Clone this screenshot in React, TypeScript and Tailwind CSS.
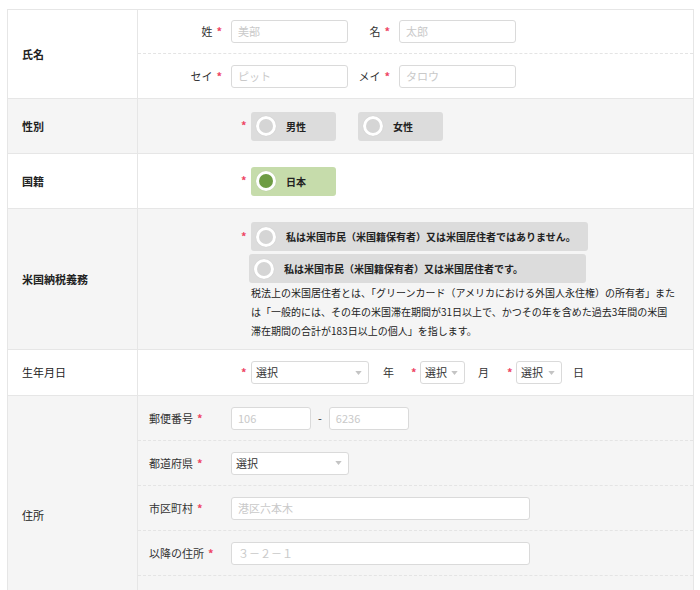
import React from 'react'

const Req = () => (
  <span className="text-[#ee4563] text-[11px] leading-none font-bold">*</span>
)

function TextInput({ w, ph }: { w: string; ph: string }) {
  return (
    <div
      className={`${w} h-[23px] flex items-center px-[6px] bg-white border border-[#dadada] rounded-[3px] text-[11px] text-[#c9c9c9] whitespace-nowrap`}
    >
      {ph}
    </div>
  )
}

function Select({ w }: { w: string }) {
  return (
    <div
      className={`${w} h-[23px] flex items-center justify-between pl-[4px] pr-[6px] bg-white border border-[#dadada] rounded-[3px] text-[11px] text-[#333] whitespace-nowrap`}
    >
      <span>選択</span>
      <svg width="7" height="4" viewBox="0 0 8 5" className="shrink-0">
        <path d="M0 0 L8 0 L4 5 Z" fill="#c4c4c4" />
      </svg>
    </div>
  )
}

function Radio({
  label,
  w,
  checked = false,
  extra = '',
}: {
  label: string
  w: string
  checked?: boolean
  extra?: string
}) {
  return (
    <div
      className={`${w} ${extra} h-[29px] flex items-center pl-[5px] rounded-[3px] ${
        checked ? 'bg-[#c6dcab]' : 'bg-[#dcdcdc]'
      }`}
    >
      <div className="w-[20px] h-[20px] shrink-0 rounded-full bg-white flex items-center justify-center shadow-[0_0_1px_rgba(0,0,0,0.15)]">
        <div
          className={`w-[14px] h-[14px] rounded-full ${checked ? 'bg-[#6e9c44]' : 'bg-[#d5d5d5]'}`}
        />
      </div>
      <span className="ml-[10px] text-[10px] font-bold text-[#222] whitespace-nowrap">{label}</span>
    </div>
  )
}

function Row({
  label,
  gray = false,
  bold = true,
  children,
}: {
  label: string
  gray?: boolean
  bold?: boolean
  children: React.ReactNode
}) {
  return (
    <div className={`flex border-t border-[#e6e6e6] first:border-t-0 ${gray ? 'bg-[#f5f5f5]' : 'bg-white'}`}>
      <div
        className={`w-[130px] shrink-0 flex items-center pl-[14px] border-r border-[#e6e6e6] text-[11px] text-[#222] ${
          bold ? 'font-bold' : ''
        }`}
      >
        {label}
      </div>
      <div className="flex-1 min-w-0">{children}</div>
    </div>
  )
}

function AddrRow({
  label,
  last = false,
  children,
}: {
  label: string
  last?: boolean
  children?: React.ReactNode
}) {
  return (
    <div
      className={`flex items-center ${last ? 'h-[58px]' : 'h-[45px] border-b border-dashed border-[#e4e4e4]'}`}
    >
      <div className="w-[93px] shrink-0 pl-[11px] text-[11px] text-[#333] flex items-center gap-[4px]">
        {label}
        {label && <Req />}
      </div>
      {children}
    </div>
  )
}

export default function App() {
  return (
    <div className="w-[700px] h-[590px] overflow-hidden bg-white font-['Noto_Sans_CJK_JP','Noto_Sans',sans-serif] text-[#333]">
      <div className="ml-[7px] mt-[9px] w-[687px] border border-[#e6e6e6]">
        {/* 氏名 */}
        <Row label="氏名">
          <div className="h-[44px] flex items-center border-b border-dashed border-[#e4e4e4]">
            <div className="w-[93px] pr-[9px] flex justify-end items-center gap-[4px] text-[11px]">
              姓<Req />
            </div>
            <TextInput w="w-[117px]" ph="美部" />
            <div className="w-[51px] pr-[9px] flex justify-end items-center gap-[4px] text-[11px]">
              名<Req />
            </div>
            <TextInput w="w-[117px]" ph="太郎" />
          </div>
          <div className="h-[44px] flex items-center">
            <div className="w-[93px] pr-[9px] flex justify-end items-center gap-[4px] text-[11px]">
              セイ<Req />
            </div>
            <TextInput w="w-[117px]" ph="ピット" />
            <div className="w-[51px] pr-[9px] flex justify-end items-center gap-[4px] text-[11px]">
              メイ<Req />
            </div>
            <TextInput w="w-[117px]" ph="タロウ" />
          </div>
        </Row>

        {/* 性別 */}
        <Row label="性別" gray>
          <div className="h-[54px] flex items-center pl-[103px]">
            <div className="w-[10px] -mt-[6px]">
              <Req />
            </div>
            <Radio label="男性" w="w-[85px]" />
            <Radio label="女性" w="w-[85px]" extra="ml-[22px]" />
          </div>
        </Row>

        {/* 国籍 */}
        <Row label="国籍">
          <div className="h-[54px] flex items-center pl-[103px]">
            <div className="w-[10px] -mt-[6px]">
              <Req />
            </div>
            <Radio label="日本" w="w-[85px]" checked />
          </div>
        </Row>

        {/* 米国納税義務 */}
        <Row label="米国納税義務" gray>
          <div className="pt-[13px] pb-[9px] pl-[103px] pr-[12px]">
            <div className="flex items-center">
              <div className="w-[10px] -mt-[6px]">
                <Req />
              </div>
              <Radio label="私は米国市民（米国籍保有者）又は米国居住者ではありません。" w="w-[337px]" />
            </div>
            <div className="flex mt-[3px] ml-[8px]">
              <Radio label="私は米国市民（米国籍保有者）又は米国居住者です。" w="w-[337px]" />
            </div>
            <p className="ml-[10px] text-[10px] leading-[19px] text-[#222] whitespace-nowrap">
              税法上の米国居住者とは、「グリーンカード（アメリカにおける外国人永住権）の所有者」また
              <br />
              は「一般的には、その年の米国滞在期間が31日以上で、かつその年を含めた過去3年間の米国
              <br />
              滞在期間の合計が183日以上の個人」を指します。
            </p>
          </div>
        </Row>

        {/* 生年月日 */}
        <Row label="生年月日" bold={false}>
          <div className="h-[45px] flex items-center pl-[103px] text-[11px]">
            <div className="w-[10px]">
              <Req />
            </div>
            <Select w="w-[118px]" />
            <span className="ml-[14px] w-[28px]">年</span>
            <div className="w-[9px]">
              <Req />
            </div>
            <Select w="w-[45px]" />
            <span className="ml-[13px] w-[29px]">月</span>
            <div className="w-[9px]">
              <Req />
            </div>
            <Select w="w-[46px]" />
            <span className="ml-[11px]">日</span>
          </div>
        </Row>

        {/* 住所 */}
        <Row label="住所" gray bold={false}>
          <AddrRow label="郵便番号">
            <TextInput w="w-[80px]" ph="106" />
            <span className="mx-[7px] text-[11px]">-</span>
            <TextInput w="w-[80px]" ph="6236" />
          </AddrRow>
          <AddrRow label="都道府県">
            <Select w="w-[118px]" />
          </AddrRow>
          <AddrRow label="市区町村">
            <TextInput w="w-[299px]" ph="港区六本木" />
          </AddrRow>
          <AddrRow label="以降の住所">
            <TextInput w="w-[299px]" ph="３－２－１" />
          </AddrRow>
          <AddrRow label="" last />
        </Row>
      </div>
    </div>
  )
}
